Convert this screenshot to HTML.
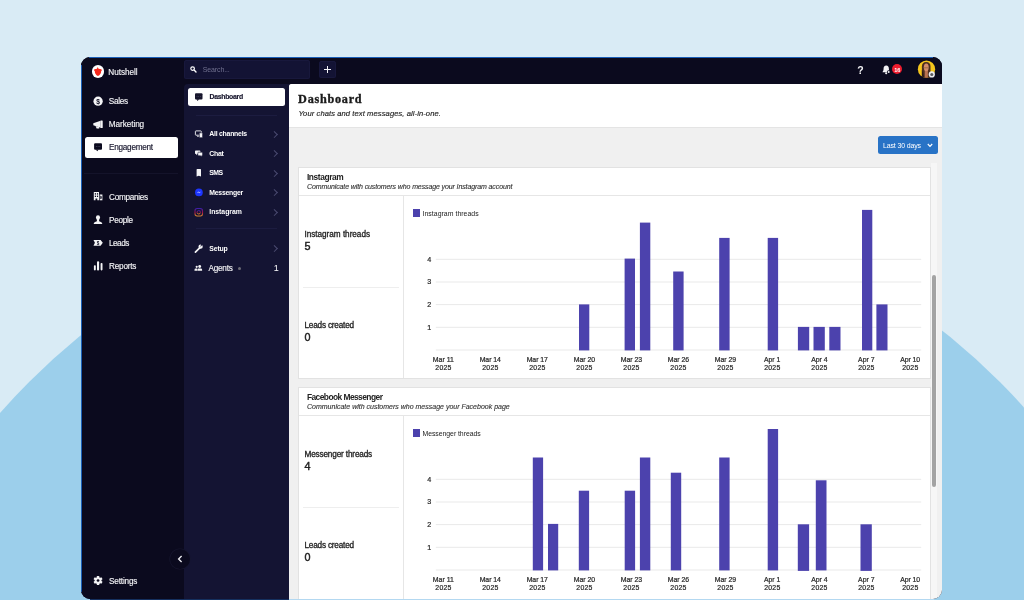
<!DOCTYPE html>
<html>
<head>
<meta charset="utf-8">
<title>Dashboard</title>
<style>
html,body{margin:0;padding:0}
body{width:1024px;height:600px;overflow:hidden;position:relative;background:#d9ebf5;font-family:"Liberation Sans",sans-serif;}
.a{position:absolute}
.circle{position:absolute;left:-172.3px;top:180.7px;width:1373px;height:1373px;border-radius:50%;background:#9ccfeb}
.win{position:absolute;left:81px;top:57px;width:861px;height:541.6px;border-radius:9px;overflow:hidden;background:#0b0a1e}
.pg{position:absolute;left:-81px;top:-57px;width:1024px;height:600px;will-change:transform}
.t{position:absolute;white-space:nowrap;line-height:20px;color:#fff}
.t.c{transform:translateX(-50%)}
.nav{font-size:8.6px;color:#f2f2f5}
.sub{font-size:7.4px;font-weight:bold;color:#fff}
.chev{position:absolute;width:3.7px;height:3.7px;border-right:1px solid #4a4a70;border-top:1px solid #4a4a70;transform:rotate(45deg)}
.card{position:absolute;left:298px;width:633px;background:#fff;border:1px solid #e2e2e2;box-sizing:border-box}
.gl{position:absolute;left:436px;width:485px;height:1px;background:#ececec}
.bar{position:absolute;background:#4c42ad}
.xl{position:absolute;white-space:nowrap;font-size:6.9px;line-height:8px;text-align:center;color:#2e2e2e;transform:translateX(-50%);-webkit-text-stroke:0.2px #2e2e2e}
.yl{position:absolute;white-space:nowrap;font-size:7.2px;line-height:1;color:#2e2e2e;transform:translate(-50%,-50%);-webkit-text-stroke:0.2px #2e2e2e}
</style>
</head>
<body>
<div class="circle"></div>
<div class="a" style="left:90px;top:598px;width:199px;height:2px;background:#15305f"></div>
<div class="a" style="left:289px;top:598px;width:645px;height:2px;background:#b3d8f1"></div>
<div class="win"><div class="pg">

<!-- top bar -->
<div class="a" style="left:81px;top:57px;width:861px;height:27px;background:#0b0a1e"></div>
<!-- main sidebar -->
<div class="a" style="left:81px;top:57px;width:103px;height:543px;background:#0b0a1e"></div>
<!-- secondary sidebar -->
<div class="a" style="left:184px;top:84px;width:106px;height:516px;background:#141433;border-top-left-radius:4px"></div>

<!-- logo -->
<div class="a" style="left:91.6px;top:65.2px;width:12.5px;height:12.5px;border-radius:50%;background:#fff"></div>


<!-- search -->
<div class="a" style="left:184px;top:60px;width:126px;height:19px;background:#131334;border-radius:2.5px;box-shadow:inset 0 0 0 1px #18183c"></div>
<svg class="a" style="left:190.3px;top:66.2px" width="7" height="7" viewBox="0 0 7 7"><circle cx="2.6" cy="2.6" r="1.8" fill="none" stroke="#fff" stroke-width="1.2"/><path d="M4.1 4.1 L6 6" stroke="#fff" stroke-width="1.4" stroke-linecap="round"/></svg>
<!-- plus -->
<div class="a" style="left:319px;top:61px;width:16.5px;height:16.5px;background:#131334;border-radius:2.5px;box-shadow:inset 0 0 0 1px #18183c"></div>
<div class="a" style="left:323.6px;top:68.8px;width:7.4px;height:1.1px;background:#f4f4f8"></div>
<div class="a" style="left:326.75px;top:65.6px;width:1.1px;height:7.4px;background:#f4f4f8"></div>

<!-- top right -->
<svg class="a" style="left:881.6px;top:64.8px" width="9.2" height="10.1" viewBox="0 0 10 11"><path d="M4.6 0.6 C2.6 0.6 1.7 2.2 1.7 4 C1.7 6 1 6.8 0.6 7.4 L0.6 8 L8.6 8 L8.6 7.4 C8.2 6.8 7.5 6 7.5 4 C7.5 2.2 6.6 0.6 4.6 0.6 Z" fill="#f1f1f4"/><circle cx="4.6" cy="9" r="1.2" fill="#f1f1f4"/><circle cx="7.3" cy="7.6" r="2" fill="#0b0a1e"/><circle cx="7.3" cy="7.6" r="1.1" fill="#f1f1f4"/></svg>
<div class="a" style="left:892.1px;top:64.3px;width:10.2px;height:10.2px;border-radius:50%;background:#ee1c2e"></div>
<!-- avatar -->

<!-- main nav -->
<div class="a" style="left:85.3px;top:137px;width:92.7px;height:20.6px;background:#fff;border-radius:2.5px"></div>
<div class="a" style="left:84px;top:173px;width:94px;height:1px;background:#14132a"></div>

<!-- collapse -->
<div class="a" style="left:169.6px;top:548.7px;width:20px;height:20px;border-radius:50%;background:#0b0a1e;box-shadow:0 0 0 0.6px #17162e"></div>
<svg class="a" style="left:176.5px;top:554.7px" width="6" height="8" viewBox="0 0 6 8"><path d="M4.6 1 L1.6 4 L4.6 7" fill="none" stroke="#f0f0f4" stroke-width="1.3"/></svg>

<!-- secondary nav -->
<div class="a" style="left:188.2px;top:88.4px;width:97px;height:17.3px;background:#fff;border-radius:2.5px"></div>
<div class="a" style="left:195.7px;top:114.5px;width:81.6px;height:1px;background:#1c1c40"></div>
<div class="a" style="left:195.7px;top:228.4px;width:81.6px;height:1px;background:#1c1c40"></div>
<div class="a" style="left:237.8px;top:266.9px;width:3.2px;height:3.2px;border-radius:50%;background:#6d6d78"></div>
<div class="chev" style="left:271.8px;top:131.6px"></div>
<div class="chev" style="left:271.8px;top:151.1px"></div>
<div class="chev" style="left:271.8px;top:170.6px"></div>
<div class="chev" style="left:271.8px;top:190.1px"></div>
<div class="chev" style="left:271.8px;top:209.6px"></div>
<div class="chev" style="left:271.8px;top:246.2px"></div>

<!-- content -->
<div class="a" style="left:289.2px;top:84px;width:660px;height:520px;background:#f0f0f0;border-top-left-radius:3px;overflow:hidden">
  <div class="a" style="left:0;top:0;width:660px;height:43px;background:#fff;border-bottom:1px solid #e4e4e4"></div>
</div>

<!-- button -->
<div class="a" style="left:878px;top:136px;width:60px;height:18px;background:#2873c6;border-radius:2.5px"></div>
<svg class="a" style="left:927.3px;top:143.3px" width="6" height="5" viewBox="0 0 6 5"><path d="M0.8 1 L3 3.3 L5.2 1" fill="none" stroke="#fff" stroke-width="1.2"/></svg>

<!-- scrollbar -->
<div class="a" style="left:930.6px;top:163.3px;width:6.6px;height:440px;background:#f6f6f6"></div>
<div class="a" style="left:932px;top:275.4px;width:4.4px;height:211.8px;background:#a3a3a3;border-radius:2px"></div>

<!-- CARD 1 -->
<div class="card" style="top:167px;height:212px"></div>
<div class="a" style="left:299px;top:195.2px;width:631px;height:1px;background:#e6e6e6"></div>
<div class="a" style="left:403px;top:196px;width:1px;height:182px;background:#e6e6e6"></div>
<div class="a" style="left:302.5px;top:286.7px;width:96.3px;height:1px;background:#eeeeee"></div>
<div class="a" style="left:412.6px;top:209.3px;width:7.8px;height:7.8px;background:#4c42ad"></div>

<!-- CARD 2 -->
<div class="card" style="top:387px;height:230px"></div>
<div class="a" style="left:299px;top:415.2px;width:631px;height:1px;background:#e6e6e6"></div>
<div class="a" style="left:403px;top:416px;width:1px;height:190px;background:#e6e6e6"></div>
<div class="a" style="left:302.5px;top:506.7px;width:96.3px;height:1px;background:#eeeeee"></div>
<div class="a" style="left:412.6px;top:429.3px;width:7.8px;height:7.8px;background:#4c42ad"></div>

<svg class="a" style="left:0;top:0" width="1024" height="600" viewBox="0 0 1024 600">
<g fill="#e9e9e9">
<rect x="435.8" y="258.8" width="485.4" height="1"/>
<rect x="435.8" y="281.5" width="485.4" height="1"/>
<rect x="435.8" y="304.1" width="485.4" height="1"/>
<rect x="435.8" y="326.8" width="485.4" height="1"/>
<rect x="435.8" y="349.5" width="485.4" height="1"/>
<rect x="435.8" y="478.8" width="485.4" height="1"/>
<rect x="435.8" y="501.5" width="485.4" height="1"/>
<rect x="435.8" y="524.1" width="485.4" height="1"/>
<rect x="435.8" y="546.8" width="485.4" height="1"/>
<rect x="435.8" y="569.5" width="485.4" height="1"/>
</g>
<g fill="#4c42ad">
<rect x="579" y="304.4" width="10.3" height="46"/>
<rect x="624.6" y="258.6" width="10.4" height="91.8"/>
<rect x="639.9" y="222.6" width="10.4" height="127.8"/>
<rect x="673.2" y="271.5" width="10.4" height="78.9"/>
<rect x="719.2" y="237.9" width="10.4" height="112.5"/>
<rect x="767.7" y="237.9" width="10.4" height="112.5"/>
<rect x="797.9" y="326.9" width="11.3" height="23.5"/>
<rect x="813.5" y="326.9" width="11.3" height="23.5"/>
<rect x="829.3" y="326.9" width="11.2" height="23.5"/>
<rect x="862" y="209.9" width="10.3" height="140.5"/>
<rect x="876.4" y="304.4" width="11.1" height="46"/>
<rect x="532.8" y="457.5" width="10.3" height="112.9"/>
<rect x="548" y="523.9" width="10.2" height="46.5"/>
<rect x="578.8" y="490.7" width="10.3" height="79.7"/>
<rect x="624.7" y="490.7" width="10.4" height="79.7"/>
<rect x="639.9" y="457.5" width="10.4" height="112.9"/>
<rect x="670.8" y="472.7" width="10.4" height="97.7"/>
<rect x="719.2" y="457.5" width="10.4" height="112.9"/>
<rect x="767.7" y="429" width="10.4" height="141.4"/>
<rect x="797.8" y="524.3" width="11.3" height="46.6"/>
<rect x="815.8" y="480.3" width="10.7" height="90.1"/>
<rect x="860.5" y="524.3" width="11.3" height="46.6"/>
</g></svg>
<div class="a" style="left:89px;top:57px;width:844px;height:1px;background:#1a5fb8"></div>
<div class="a" style="left:81px;top:65px;width:1px;height:527px;background:#1a5fb8"></div>
<svg class="a" style="left:0;top:0" width="1024" height="600" viewBox="0 0 1024 600">
<defs><linearGradient id="ig" x1="0" y1="0" x2="0" y2="1"><stop offset="0" stop-color="#3f1fa8"/><stop offset="0.5" stop-color="#990f48"/><stop offset="1" stop-color="#d8862c"/></linearGradient></defs>
<path d="M97.75 66.9 L98.5 68.75 L101.4 69.2 L101.9 70.6 L101.2 71.05 C101.2 73.5 100 75.2 97.95 75.9 C95.9 75.2 94.75 73.5 94.75 71.05 L94 70.6 L94.35 69.2 L96.95 68.75 Z" fill="#f5271b"/>
<g fill="#f4f4f6">
<!-- sales -->
<circle cx="98.1" cy="101.2" r="4.65"/>
<text x="98.1" y="103.6" font-family="Liberation Sans" font-size="6.6" font-weight="bold" text-anchor="middle" fill="#0b0a1e">$</text>
<!-- marketing -->
<path d="M93.3 123.3 L100.6 120.8 L100.6 127.8 L93.3 125.3 Z"/>
<rect x="100.5" y="120.5" width="2.2" height="7.5" rx="0.6"/>
<path d="M95.6 126 L98.9 127.1 L99.3 128.4 L96.6 128.4 Z"/>
<!-- companies -->
<path d="M93.8 192 H99 V200.3 H97.3 V198.4 H95.5 V200.3 H93.8 Z"/>
<path d="M99.7 194.5 H102.4 V200.3 H99.7 Z"/>
<g fill="#0b0a1e"><rect x="94.8" y="193.2" width="1.2" height="1.4"/><rect x="96.9" y="193.2" width="1.2" height="1.4"/><rect x="94.8" y="195.6" width="1.2" height="1.4"/><rect x="96.9" y="195.6" width="1.2" height="1.4"/><path d="M100.3 195.6 L101.7 196.6 L101.7 198.4 L100.3 199.2Z"/></g>
<!-- people -->
<ellipse cx="98" cy="217.6" rx="2.05" ry="2.4"/>
<path d="M96.9 219 L96.9 221.2 C95.2 221.8 93.7 222.2 93.7 224.1 L102.3 224.1 C102.3 222.2 100.8 221.8 99.1 221.2 L99.1 219 Z"/>
<!-- leads -->
<path d="M93.5 240 L100.6 240 L102.8 242.85 L100.6 245.7 L93.5 245.7 L94.9 242.85 Z"/>
<text x="98" y="244.5" font-family="Liberation Sans" font-size="4.6" font-weight="bold" text-anchor="middle" fill="#0b0a1e">$</text>
<!-- reports -->
<rect x="93.9" y="265.3" width="1.9" height="5.1" rx="0.8"/>
<rect x="97" y="261.3" width="2.1" height="9.1" rx="0.9"/>
<rect x="100.6" y="263" width="1.9" height="7.4" rx="0.8"/>
<!-- settings gear -->
<g transform="translate(98.05,580.5)">
<circle r="3.35"/>
<rect x="-1.25" y="-4.6" width="2.5" height="3" rx="0.6"/>
<rect x="-1.25" y="-4.6" width="2.5" height="3" rx="0.6" transform="rotate(60)"/>
<rect x="-1.25" y="-4.6" width="2.5" height="3" rx="0.6" transform="rotate(120)"/>
<rect x="-1.25" y="-4.6" width="2.5" height="3" rx="0.6" transform="rotate(180)"/>
<rect x="-1.25" y="-4.6" width="2.5" height="3" rx="0.6" transform="rotate(240)"/>
<rect x="-1.25" y="-4.6" width="2.5" height="3" rx="0.6" transform="rotate(300)"/>
<circle r="1.35" fill="#0b0a1e"/>
</g>
</g>
<!-- engagement (dark) -->
<g fill="#0b0a1e">
<rect x="94.1" y="143.2" width="7.9" height="6.6" rx="1"/>
<path d="M95.9 149.5 L97.2 151.3 L98.7 149.5 Z"/>
</g>
<g fill="#77778f"><circle cx="96.2" cy="146.5" r="0.4"/><circle cx="98.05" cy="146.5" r="0.4"/><circle cx="99.9" cy="146.5" r="0.4"/></g>
<!-- dashboard (dark) -->
<g fill="#16152c">
<rect x="195" y="93.2" width="7.5" height="6.3" rx="1"/>
<path d="M196.5 99.2 L197.5 101 L199.1 99.2 Z"/>
</g>
<g fill="#77778f"><circle cx="197" cy="96.3" r="0.35"/><circle cx="198.75" cy="96.3" r="0.35"/><circle cx="200.5" cy="96.3" r="0.35"/></g>
<!-- sub nav icons -->
<g fill="#f4f4f6">
<!-- all channels -->
<rect x="195.4" y="130.9" width="5.9" height="4.3" rx="0.6" fill="none" stroke="#f4f4f6" stroke-width="0.9"/>
<path d="M197 136.3 H199 " stroke="#f4f4f6" stroke-width="0.8"/>
<rect x="199.3" y="132.8" width="3.3" height="4.9" rx="0.6" stroke="#141433" stroke-width="0.6"/>
<!-- chat -->
<path d="M195.8 150.5 H199.6 Q200.4 150.5 200.4 151.3 V153.3 Q200.4 154.1 199.6 154.1 H197.4 L196.2 155.2 V154.1 H195.8 Q195 154.1 195 153.3 V151.3 Q195 150.5 195.8 150.5Z"/>
<path d="M198.6 152.2 H201.8 Q202.6 152.2 202.6 153 V155 Q202.6 155.8 201.8 155.8 H201.6 V156.8 L200.4 155.8 H198.6 Q197.8 155.8 197.8 155 V153 Q197.8 152.2 198.6 152.2Z" stroke="#141433" stroke-width="0.6"/>
<!-- sms -->
<path d="M197.2 169 H200.4 Q201 169 201 169.6 V176.5 L198.8 175.7 L196.6 176.5 V169.6 Q196.6 169 197.2 169Z"/>
<!-- setup wrench -->
<path d="M195.4 252.1 L199.9 247.6" stroke="#f4f4f6" stroke-width="1.7" stroke-linecap="round"/>
<circle cx="200.6" cy="246.7" r="2.15"/>
<path d="M200.4 246.9 L203.2 244.1 L201.2 243.6 Z" fill="#141433"/>
<!-- agents -->
<circle cx="196.7" cy="266.8" r="1.1"/>
<path d="M194.5 270.8 V269.8 Q194.5 268.6 195.7 268.6 H197 V270.8Z"/>
<circle cx="199.7" cy="266.5" r="1.4"/>
<path d="M197.3 270.8 V269.8 Q197.3 268.5 198.6 268.5 H200.8 Q202.1 268.5 202.1 269.8 V270.8Z"/>
</g>
<!-- avatar -->
<clipPath id="avc"><circle cx="926.5" cy="69.2" r="8.65"/></clipPath>
<circle cx="926.5" cy="69.2" r="8.65" fill="#f4c51c"/>
<g clip-path="url(#avc)">
<path d="M921.9 79 V66.4 Q921.9 61.9 926.2 61.9 Q930.5 61.9 930.5 66.4 V79 Z" fill="#4b2e20"/>
<rect x="924.7" y="69.5" width="3.2" height="9" fill="#b9724f"/>
<ellipse cx="926.25" cy="67.3" rx="2.45" ry="3.9" fill="#d48c6a"/>
<rect x="923.9" y="67.3" width="4.7" height="1" fill="#6e5a2c" opacity=".55"/>
<path d="M921.9 79 V70 Q923.6 73 924.4 79 Z" fill="#2e1c14"/>
</g>
<circle cx="931.8" cy="74.45" r="3.1" fill="#ebebef"/>
<circle cx="931.8" cy="74.45" r="1.55" fill="#5a5a60"/>
<!-- messenger -->
<circle cx="198.9" cy="192.4" r="3.85" fill="#1d36ff"/>
<path d="M196.9 193.3 L198.3 191.5 L199.3 192.5 L200.9 191.5 L199.5 193.3 L198.5 192.3 Z" fill="#e8ecff"/>
<!-- instagram -->
<rect x="195" y="208.5" width="7.5" height="7.5" rx="2.2" fill="none" stroke="url(#ig)" stroke-width="1.1"/>
<circle cx="198.75" cy="212.25" r="1.7" fill="none" stroke="url(#ig)" stroke-width="1"/>
<circle cx="200.9" cy="210.1" r="0.45" fill="#7a1a9a"/>
</svg>

<span class="t" style="left:108.30px;top:63px;font-size:8.2px;color:#f2f2f5;-webkit-text-stroke:0.15px #f2f2f5;letter-spacing:-0.03px;">Nutshell</span>
<span class="t" style="left:202.80px;top:60px;font-size:7.0px;color:#6f6f8e;letter-spacing:-0.14px;">Search...</span>
<span class="t c" style="left:860.50px;top:60px;font-size:10.5px;font-weight:bold;color:#f4f4f6;">?</span>
<span class="t c" style="left:897.30px;top:60px;font-size:5.6px;font-weight:bold;color:#fff;">16</span>
<span class="t" style="left:108.85px;top:92px;font-size:8.2px;color:#f2f2f5;-webkit-text-stroke:0.15px #f2f2f5;letter-spacing:-0.31px;">Sales</span>
<span class="t" style="left:108.85px;top:115px;font-size:8.2px;color:#f2f2f5;-webkit-text-stroke:0.15px #f2f2f5;letter-spacing:-0.08px;">Marketing</span>
<span class="t" style="left:109.00px;top:138px;font-size:8.2px;color:#16152c;-webkit-text-stroke:0.15px #16152c;letter-spacing:-0.26px;">Engagement</span>
<span class="t" style="left:109.00px;top:188px;font-size:8.2px;color:#f2f2f5;-webkit-text-stroke:0.15px #f2f2f5;letter-spacing:-0.28px;">Companies</span>
<span class="t" style="left:109.00px;top:211px;font-size:8.2px;color:#f2f2f5;-webkit-text-stroke:0.15px #f2f2f5;letter-spacing:-0.27px;">People</span>
<span class="t" style="left:109.00px;top:234px;font-size:8.2px;color:#f2f2f5;-webkit-text-stroke:0.15px #f2f2f5;letter-spacing:-0.51px;">Leads</span>
<span class="t" style="left:109.00px;top:257px;font-size:8.2px;color:#f2f2f5;-webkit-text-stroke:0.15px #f2f2f5;letter-spacing:-0.20px;">Reports</span>
<span class="t" style="left:109.00px;top:572px;font-size:8.2px;color:#f2f2f5;-webkit-text-stroke:0.15px #f2f2f5;letter-spacing:-0.16px;">Settings</span>
<span class="t" style="left:209.60px;top:87px;font-size:6.9px;font-weight:bold;color:#16152c;-webkit-text-stroke:0.15px #16152c;letter-spacing:-0.31px;">Dashboard</span>
<span class="t" style="left:209.30px;top:124px;font-size:6.9px;font-weight:bold;color:#fff;letter-spacing:-0.25px;">All channels</span>
<span class="t" style="left:209.30px;top:144px;font-size:6.9px;font-weight:bold;color:#fff;letter-spacing:-0.26px;">Chat</span>
<span class="t" style="left:209.30px;top:163px;font-size:6.9px;font-weight:bold;color:#fff;letter-spacing:-0.57px;">SMS</span>
<span class="t" style="left:209.30px;top:183px;font-size:6.9px;font-weight:bold;color:#fff;letter-spacing:-0.25px;">Messenger</span>
<span class="t" style="left:209.30px;top:202px;font-size:6.9px;font-weight:bold;color:#fff;letter-spacing:-0.05px;">Instagram</span>
<span class="t" style="left:209.30px;top:239px;font-size:6.9px;font-weight:bold;color:#fff;letter-spacing:-0.17px;">Setup</span>
<span class="t" style="left:208.50px;top:259px;font-size:8.2px;color:#f2f2f5;-webkit-text-stroke:0.15px #f2f2f5;letter-spacing:-0.24px;">Agents</span>
<span class="t c" style="left:276.20px;top:259px;font-size:8.2px;color:#f2f2f5;-webkit-text-stroke:0.15px #f2f2f5;">1</span>
<span class="t" style="left:298.10px;top:89px;font-size:12.2px;font-family:'Liberation Serif',serif;font-weight:bold;color:#1b1b1b;-webkit-text-stroke:0.35px #1b1b1b;letter-spacing:0.74px;">Dashboard</span>
<span class="t" style="left:298.40px;top:104px;font-size:7.6px;font-style:italic;color:#1e1e1e;-webkit-text-stroke:0.15px #1e1e1e;letter-spacing:0.08px;">Your chats and text messages, all-in-one.</span>
<span class="t" style="left:883.00px;top:136px;font-size:7.0px;color:#fff;letter-spacing:-0.15px;">Last 30 days</span>
<span class="t" style="left:306.90px;top:167px;font-size:8.4px;font-weight:bold;color:#222;letter-spacing:-0.39px;">Instagram</span>
<span class="t" style="left:307.00px;top:177px;font-size:7.0px;font-style:italic;color:#333;-webkit-text-stroke:0.12px #333;letter-spacing:-0.11px;">Communicate with customers who message your Instagram account</span>
<span class="t" style="left:304.50px;top:225px;font-size:8.2px;color:#222;-webkit-text-stroke:0.3px #222;letter-spacing:-0.03px;">Instagram threads</span>
<span class="t" style="left:304.40px;top:236px;font-size:10.8px;color:#222;-webkit-text-stroke:0.45px #222;">5</span>
<span class="t" style="left:304.40px;top:316px;font-size:8.2px;color:#222;-webkit-text-stroke:0.3px #222;letter-spacing:-0.18px;">Leads created</span>
<span class="t" style="left:304.40px;top:327px;font-size:10.8px;color:#222;-webkit-text-stroke:0.45px #222;">0</span>
<span class="t" style="left:422.50px;top:204px;font-size:6.9px;color:#222;letter-spacing:0.04px;">Instagram threads</span>
<span class="t c" style="left:429.30px;top:250px;font-size:7.2px;color:#2a2a2a;-webkit-text-stroke:0.22px #2a2a2a;">4</span>
<span class="t c" style="left:429.30px;top:272px;font-size:7.2px;color:#2a2a2a;-webkit-text-stroke:0.22px #2a2a2a;">3</span>
<span class="t c" style="left:429.30px;top:295px;font-size:7.2px;color:#2a2a2a;-webkit-text-stroke:0.22px #2a2a2a;">2</span>
<span class="t c" style="left:429.30px;top:318px;font-size:7.2px;color:#2a2a2a;-webkit-text-stroke:0.22px #2a2a2a;">1</span>
<span class="t c" style="left:443.41px;top:350px;font-size:6.9px;color:#2a2a2a;-webkit-text-stroke:0.22px #2a2a2a;letter-spacing:0.03px;">Mar 11</span>
<span class="t c" style="left:443.52px;top:358px;font-size:6.9px;color:#2a2a2a;-webkit-text-stroke:0.22px #2a2a2a;letter-spacing:0.24px;">2025</span>
<span class="t c" style="left:490.29px;top:350px;font-size:6.9px;color:#2a2a2a;-webkit-text-stroke:0.22px #2a2a2a;letter-spacing:-0.03px;">Mar 14</span>
<span class="t c" style="left:490.42px;top:358px;font-size:6.9px;color:#2a2a2a;-webkit-text-stroke:0.22px #2a2a2a;letter-spacing:0.24px;">2025</span>
<span class="t c" style="left:537.29px;top:350px;font-size:6.9px;color:#2a2a2a;-webkit-text-stroke:0.22px #2a2a2a;letter-spacing:-0.03px;">Mar 17</span>
<span class="t c" style="left:537.42px;top:358px;font-size:6.9px;color:#2a2a2a;-webkit-text-stroke:0.22px #2a2a2a;letter-spacing:0.24px;">2025</span>
<span class="t c" style="left:584.39px;top:350px;font-size:6.9px;color:#2a2a2a;-webkit-text-stroke:0.22px #2a2a2a;letter-spacing:-0.03px;">Mar 20</span>
<span class="t c" style="left:584.52px;top:358px;font-size:6.9px;color:#2a2a2a;-webkit-text-stroke:0.22px #2a2a2a;letter-spacing:0.24px;">2025</span>
<span class="t c" style="left:631.39px;top:350px;font-size:6.9px;color:#2a2a2a;-webkit-text-stroke:0.22px #2a2a2a;letter-spacing:-0.03px;">Mar 23</span>
<span class="t c" style="left:631.52px;top:358px;font-size:6.9px;color:#2a2a2a;-webkit-text-stroke:0.22px #2a2a2a;letter-spacing:0.24px;">2025</span>
<span class="t c" style="left:678.39px;top:350px;font-size:6.9px;color:#2a2a2a;-webkit-text-stroke:0.22px #2a2a2a;letter-spacing:-0.03px;">Mar 26</span>
<span class="t c" style="left:678.52px;top:358px;font-size:6.9px;color:#2a2a2a;-webkit-text-stroke:0.22px #2a2a2a;letter-spacing:0.24px;">2025</span>
<span class="t c" style="left:725.39px;top:350px;font-size:6.9px;color:#2a2a2a;-webkit-text-stroke:0.22px #2a2a2a;letter-spacing:-0.03px;">Mar 29</span>
<span class="t c" style="left:725.52px;top:358px;font-size:6.9px;color:#2a2a2a;-webkit-text-stroke:0.22px #2a2a2a;letter-spacing:0.24px;">2025</span>
<span class="t c" style="left:772.20px;top:350px;font-size:6.9px;color:#2a2a2a;-webkit-text-stroke:0.22px #2a2a2a;">Apr 1</span>
<span class="t c" style="left:772.32px;top:358px;font-size:6.9px;color:#2a2a2a;-webkit-text-stroke:0.22px #2a2a2a;letter-spacing:0.24px;">2025</span>
<span class="t c" style="left:819.40px;top:350px;font-size:6.9px;color:#2a2a2a;-webkit-text-stroke:0.22px #2a2a2a;">Apr 4</span>
<span class="t c" style="left:819.52px;top:358px;font-size:6.9px;color:#2a2a2a;-webkit-text-stroke:0.22px #2a2a2a;letter-spacing:0.24px;">2025</span>
<span class="t c" style="left:866.30px;top:350px;font-size:6.9px;color:#2a2a2a;-webkit-text-stroke:0.22px #2a2a2a;">Apr 7</span>
<span class="t c" style="left:866.42px;top:358px;font-size:6.9px;color:#2a2a2a;-webkit-text-stroke:0.22px #2a2a2a;letter-spacing:0.24px;">2025</span>
<span class="t c" style="left:910.17px;top:350px;font-size:6.9px;color:#2a2a2a;-webkit-text-stroke:0.22px #2a2a2a;letter-spacing:-0.06px;">Apr 10</span>
<span class="t c" style="left:910.32px;top:358px;font-size:6.9px;color:#2a2a2a;-webkit-text-stroke:0.22px #2a2a2a;letter-spacing:0.24px;">2025</span>
<span class="t" style="left:306.90px;top:387px;font-size:8.4px;font-weight:bold;color:#222;letter-spacing:-0.54px;">Facebook Messenger</span>
<span class="t" style="left:307.00px;top:397px;font-size:7.0px;font-style:italic;color:#333;-webkit-text-stroke:0.12px #333;">Communicate with customers who message your Facebook page</span>
<span class="t" style="left:304.50px;top:445px;font-size:8.2px;color:#222;-webkit-text-stroke:0.3px #222;letter-spacing:-0.15px;">Messenger threads</span>
<span class="t" style="left:304.40px;top:456px;font-size:10.8px;color:#222;-webkit-text-stroke:0.45px #222;">4</span>
<span class="t" style="left:304.40px;top:536px;font-size:8.2px;color:#222;-webkit-text-stroke:0.3px #222;letter-spacing:-0.18px;">Leads created</span>
<span class="t" style="left:304.40px;top:547px;font-size:10.8px;color:#222;-webkit-text-stroke:0.45px #222;">0</span>
<span class="t" style="left:422.50px;top:424px;font-size:6.9px;color:#222;letter-spacing:-0.05px;">Messenger threads</span>
<span class="t c" style="left:429.30px;top:470px;font-size:7.2px;color:#2a2a2a;-webkit-text-stroke:0.22px #2a2a2a;">4</span>
<span class="t c" style="left:429.30px;top:492px;font-size:7.2px;color:#2a2a2a;-webkit-text-stroke:0.22px #2a2a2a;">3</span>
<span class="t c" style="left:429.30px;top:515px;font-size:7.2px;color:#2a2a2a;-webkit-text-stroke:0.22px #2a2a2a;">2</span>
<span class="t c" style="left:429.30px;top:538px;font-size:7.2px;color:#2a2a2a;-webkit-text-stroke:0.22px #2a2a2a;">1</span>
<span class="t c" style="left:443.41px;top:570px;font-size:6.9px;color:#2a2a2a;-webkit-text-stroke:0.22px #2a2a2a;letter-spacing:0.03px;">Mar 11</span>
<span class="t c" style="left:443.52px;top:578px;font-size:6.9px;color:#2a2a2a;-webkit-text-stroke:0.22px #2a2a2a;letter-spacing:0.24px;">2025</span>
<span class="t c" style="left:490.29px;top:570px;font-size:6.9px;color:#2a2a2a;-webkit-text-stroke:0.22px #2a2a2a;letter-spacing:-0.03px;">Mar 14</span>
<span class="t c" style="left:490.42px;top:578px;font-size:6.9px;color:#2a2a2a;-webkit-text-stroke:0.22px #2a2a2a;letter-spacing:0.24px;">2025</span>
<span class="t c" style="left:537.29px;top:570px;font-size:6.9px;color:#2a2a2a;-webkit-text-stroke:0.22px #2a2a2a;letter-spacing:-0.03px;">Mar 17</span>
<span class="t c" style="left:537.42px;top:578px;font-size:6.9px;color:#2a2a2a;-webkit-text-stroke:0.22px #2a2a2a;letter-spacing:0.24px;">2025</span>
<span class="t c" style="left:584.39px;top:570px;font-size:6.9px;color:#2a2a2a;-webkit-text-stroke:0.22px #2a2a2a;letter-spacing:-0.03px;">Mar 20</span>
<span class="t c" style="left:584.52px;top:578px;font-size:6.9px;color:#2a2a2a;-webkit-text-stroke:0.22px #2a2a2a;letter-spacing:0.24px;">2025</span>
<span class="t c" style="left:631.39px;top:570px;font-size:6.9px;color:#2a2a2a;-webkit-text-stroke:0.22px #2a2a2a;letter-spacing:-0.03px;">Mar 23</span>
<span class="t c" style="left:631.52px;top:578px;font-size:6.9px;color:#2a2a2a;-webkit-text-stroke:0.22px #2a2a2a;letter-spacing:0.24px;">2025</span>
<span class="t c" style="left:678.39px;top:570px;font-size:6.9px;color:#2a2a2a;-webkit-text-stroke:0.22px #2a2a2a;letter-spacing:-0.03px;">Mar 26</span>
<span class="t c" style="left:678.52px;top:578px;font-size:6.9px;color:#2a2a2a;-webkit-text-stroke:0.22px #2a2a2a;letter-spacing:0.24px;">2025</span>
<span class="t c" style="left:725.39px;top:570px;font-size:6.9px;color:#2a2a2a;-webkit-text-stroke:0.22px #2a2a2a;letter-spacing:-0.03px;">Mar 29</span>
<span class="t c" style="left:725.52px;top:578px;font-size:6.9px;color:#2a2a2a;-webkit-text-stroke:0.22px #2a2a2a;letter-spacing:0.24px;">2025</span>
<span class="t c" style="left:772.20px;top:570px;font-size:6.9px;color:#2a2a2a;-webkit-text-stroke:0.22px #2a2a2a;">Apr 1</span>
<span class="t c" style="left:772.32px;top:578px;font-size:6.9px;color:#2a2a2a;-webkit-text-stroke:0.22px #2a2a2a;letter-spacing:0.24px;">2025</span>
<span class="t c" style="left:819.40px;top:570px;font-size:6.9px;color:#2a2a2a;-webkit-text-stroke:0.22px #2a2a2a;">Apr 4</span>
<span class="t c" style="left:819.52px;top:578px;font-size:6.9px;color:#2a2a2a;-webkit-text-stroke:0.22px #2a2a2a;letter-spacing:0.24px;">2025</span>
<span class="t c" style="left:866.30px;top:570px;font-size:6.9px;color:#2a2a2a;-webkit-text-stroke:0.22px #2a2a2a;">Apr 7</span>
<span class="t c" style="left:866.42px;top:578px;font-size:6.9px;color:#2a2a2a;-webkit-text-stroke:0.22px #2a2a2a;letter-spacing:0.24px;">2025</span>
<span class="t c" style="left:910.17px;top:570px;font-size:6.9px;color:#2a2a2a;-webkit-text-stroke:0.22px #2a2a2a;letter-spacing:-0.06px;">Apr 10</span>
<span class="t c" style="left:910.32px;top:578px;font-size:6.9px;color:#2a2a2a;-webkit-text-stroke:0.22px #2a2a2a;letter-spacing:0.24px;">2025</span>
</div></div>
</body>
</html>
